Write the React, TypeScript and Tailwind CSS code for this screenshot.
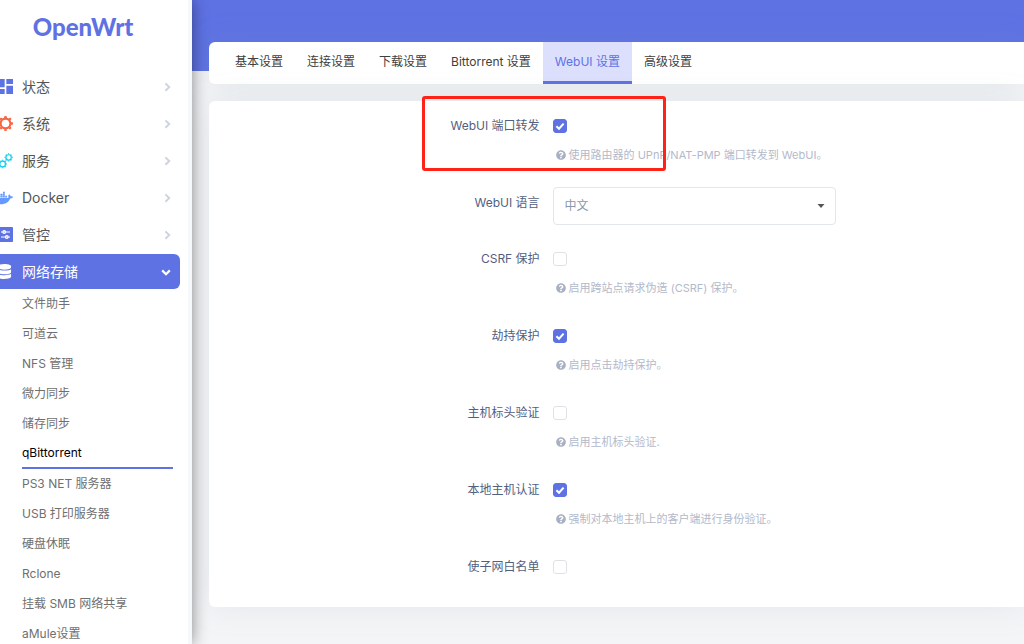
import { useState } from 'react';
import type { ReactNode } from 'react';
import { FaDatabase, FaDocker, FaQuestionCircle } from 'react-icons/fa';

interface MenuItem {
  label: string;
  icon: ReactNode;
}

interface CheckFieldProps {
  id: string;
  label: string;
  help?: string;
  defaultChecked?: boolean;
  highlighted?: boolean;
}

const TEETH = [0, 45, 90, 135, 180, 225, 270, 315];

function Gear({ x = 12, y = 12, scale = 1 }: { x?: number; y?: number; scale?: number }) {
  return (
    <g transform={`translate(${x} ${y}) scale(${scale})`}>
      <circle r="7.8" fill="none" stroke="currentColor" strokeWidth="3.4" />
      {TEETH.map((angle) => (
        <path key={angle} d="M-2.4 -9 L-1.6 -12 H1.6 L2.4 -9 Z" fill="currentColor" transform={`rotate(${angle})`} />
      ))}
    </g>
  );
}

function DashboardIcon() {
  return (
    <svg viewBox="3 3 18 18" className="size-[15px] shrink-0 text-[#5e72e4]" aria-hidden="true">
      <path d="M3 13h8V3H3v10zm0 8h8v-6H3v6zm10 0h8V11h-8v10zm0-18v6h8V3h-8z" fill="currentColor" />
    </svg>
  );
}

function GearIcon() {
  return (
    <svg viewBox="0 0 24 24" className="size-[15px] shrink-0 text-[#fb6340]" aria-hidden="true">
      <Gear />
    </svg>
  );
}

function GearsIcon() {
  return (
    <svg viewBox="0 0 16 16" className="size-4 shrink-0 text-[#11cdef]" aria-hidden="true">
      <Gear x={5.6} y={11} scale={0.36} />
      <Gear x={11.6} y={4.4} scale={0.34} />
    </svg>
  );
}

function ControlIcon() {
  return (
    <svg viewBox="0 0 15 15" className="size-[15px] shrink-0" aria-hidden="true">
      <rect width="15" height="15" rx="0.8" fill="#5e72e4" />
      <path d="M3 5h9M3 10h9" stroke="#fff" strokeWidth="1.2" />
      <circle cx="6.2" cy="5" r="1.9" fill="#fff" />
      <circle cx="8.8" cy="10" r="1.9" fill="#fff" />
      <circle cx="6.2" cy="5" r="0.6" fill="#5e72e4" />
      <circle cx="8.8" cy="10" r="0.6" fill="#5e72e4" />
    </svg>
  );
}

function ChevronRight() {
  return (
    <svg viewBox="0 0 10 10" className="size-2.5 shrink-0" aria-hidden="true">
      <path d="M3.4 1.4L7.2 5.1L3.4 8.8" fill="none" stroke="#ced4da" strokeWidth="2" />
    </svg>
  );
}

function ChevronDown() {
  return (
    <svg viewBox="0 0 10 10" className="size-2.5 shrink-0" aria-hidden="true">
      <path d="M1.2 3.4L5 7.2L8.8 3.4" fill="none" stroke="#fff" strokeWidth="2.2" />
    </svg>
  );
}

const MENU: MenuItem[] = [
  { label: '状态', icon: <DashboardIcon /> },
  { label: '系统', icon: <GearIcon /> },
  { label: '服务', icon: <GearsIcon /> },
  { label: 'Docker', icon: <FaDocker className="size-[18px] shrink-0 text-[#6699ff]" /> },
  { label: '管控', icon: <ControlIcon /> },
];

const STORAGE_ITEMS = [
  '文件助手',
  '可道云',
  'NFS 管理',
  '微力同步',
  '储存同步',
  'qBittorrent',
  'PS3 NET 服务器',
  'USB 打印服务器',
  '硬盘休眠',
  'Rclone',
  '挂载 SMB 网络共享',
  'aMule设置',
];

const TABS = ['基本设置', '连接设置', '下载设置', 'Bittorrent 设置', 'WebUI 设置', '高级设置'];

function Sidebar() {
  return (
    <aside className="relative z-10 w-48 shrink-0 border-r-4 border-[#f6f9fc] bg-white shadow-[0_0_15px_rgba(0,0,0,0.45)]">
      <a href="#" className="flex h-[54px] items-center justify-center pr-[22px] font-[Lato,sans-serif] text-2xl font-black text-[#5e72e4]">
        OpenWrt
      </a>
      <nav className="mt-[15px] overflow-hidden">
        <ul className="flex flex-col gap-[2px]">
          {MENU.map((item) => (
            <li key={item.label}>
              <a href="#" className="flex h-[35px] items-center pr-4 text-sm text-[#555]">
                <span className="-ml-[5px] flex w-[18px] shrink-0 justify-end">{item.icon}</span>
                <span className="ml-[9px] flex-1">{item.label}</span>
                <ChevronRight />
              </a>
            </li>
          ))}
          <li>
            <a href="#" className="mr-2 flex h-[35px] items-center rounded-r-md bg-[#5e72e4] pr-[9px] text-sm text-white">
              <span className="-ml-[5px] flex w-[17px] shrink-0 justify-end">
                <FaDatabase className="size-[15px]" />
              </span>
              <span className="ml-2.5 flex-1">网络存储</span>
              <ChevronDown />
            </a>
            <ul className="ml-[22px] mr-[15px]">
              {STORAGE_ITEMS.map((label) => (
                <li key={label}>
                  <a
                    href="#"
                    className={
                      label === 'qBittorrent'
                        ? 'flex h-[30px] items-center border-b-2 border-[#5e72e4] text-xs text-black'
                        : 'flex h-[30px] items-center text-xs text-[#6f6f6f]'
                    }
                  >
                    {label}
                  </a>
                </li>
              ))}
            </ul>
          </li>
        </ul>
      </nav>
    </aside>
  );
}

function Tabs() {
  const [active, setActive] = useState('WebUI 设置');

  return (
    <div role="tablist" className="flex h-[42px] rounded-l-md bg-white pl-3.5 shadow-[0_0_32px_rgba(136,152,170,0.15)]">
      {TABS.map((tab) => (
        <button
          key={tab}
          type="button"
          role="tab"
          aria-selected={tab === active}
          onClick={() => setActive(tab)}
          className={
            tab === active
              ? 'border-b-3 border-[#5e72e4] bg-[#dce0fd] px-3 text-xs text-[#5e72e4]'
              : 'border-b-3 border-transparent px-3 text-xs text-[#404040]'
          }
        >
          {tab}
        </button>
      ))}
    </div>
  );
}

function CheckField({ id, label, help, defaultChecked, highlighted }: CheckFieldProps) {
  return (
    <div className="relative flex">
      <label htmlFor={id} className="w-5/12 pr-[9px] text-right leading-6">
        {label}
      </label>
      <div className="flex-1 pl-1">
        <div className="relative flex h-6 items-center">
          <input
            id={id}
            type="checkbox"
            defaultChecked={defaultChecked}
            className="peer size-3.5 appearance-none rounded-[3px] border border-[#dee2e6] bg-white checked:border-[#5e72e4] checked:bg-[#5e72e4]"
          />
          <svg
            viewBox="0 0 10 10"
            className="pointer-events-none absolute left-[2px] hidden size-2.5 peer-checked:block"
            aria-hidden="true"
          >
            <path d="M1.4 5.2L4 7.7L8.6 2.6" fill="none" stroke="#fff" strokeWidth="2" />
          </svg>
        </div>
        {help && (
          <p className="mt-[5px] flex h-6 items-center gap-[3px] pl-[3px] text-[11px] text-[#b3b9ca]">
            <FaQuestionCircle className="size-2.5 shrink-0 text-[#a9b0c2]" />
            {help}
          </p>
        )}
      </div>
      {highlighted && (
        <div className="pointer-events-none absolute -top-[18px] left-[213px] h-[75px] w-[244px] rounded-[3px] border-3 border-[#ff2216]" />
      )}
    </div>
  );
}

export default function App() {
  return (
    <div className="flex h-screen overflow-hidden bg-[#f4f5f7] font-[Inter,'Noto_Sans_CJK_SC',sans-serif]">
      <Sidebar />
      <main className="min-w-0 flex-1">
        <div className="h-[71px] bg-[#5e72e4]" />
        <div className="-mt-[29px] flex flex-col gap-[17px] pl-[17px]">
          <Tabs />
          <form className="flex flex-col gap-6 rounded-l-md bg-white pt-[13px] pb-7 text-xs text-[#525f7f] shadow-[0_0_32px_rgba(136,152,170,0.15)]">
            <CheckField
              id="upnp"
              label="WebUI 端口转发"
              help="使用路由器的 UPnP/NAT-PMP 端口转发到 WebUI。"
              defaultChecked
              highlighted
            />
            <div className="flex">
              <label htmlFor="locale" className="w-5/12 pr-[9px] text-right leading-6">
                WebUI 语言
              </label>
              <div className="flex-1 pl-1">
                <div className="relative -mt-1 -mb-0.5 w-[283px]">
                  <select
                    id="locale"
                    className="h-[38px] w-full appearance-none rounded-sm border border-[#e3e6ea] bg-white px-[11px] text-[#8898aa]"
                  >
                    <option>中文</option>
                    <option>English</option>
                  </select>
                  <svg viewBox="0 0 8 4" className="pointer-events-none absolute top-[17px] right-[11px] h-1 w-2" aria-hidden="true">
                    <path d="M0.5 0h7L4 4z" fill="#555" />
                  </svg>
                </div>
              </div>
            </div>
            <CheckField id="csrf" label="CSRF 保护" help="启用跨站点请求伪造 (CSRF) 保护。" />
            <CheckField id="clickjacking" label="劫持保护" help="启用点击劫持保护。" defaultChecked />
            <CheckField id="host-header" label="主机标头验证" help="启用主机标头验证." />
            <CheckField id="local-auth" label="本地主机认证" help="强制对本地主机上的客户端进行身份验证。" defaultChecked />
            <CheckField id="subnet" label="使子网白名单" />
          </form>
        </div>
      </main>
    </div>
  );
}
